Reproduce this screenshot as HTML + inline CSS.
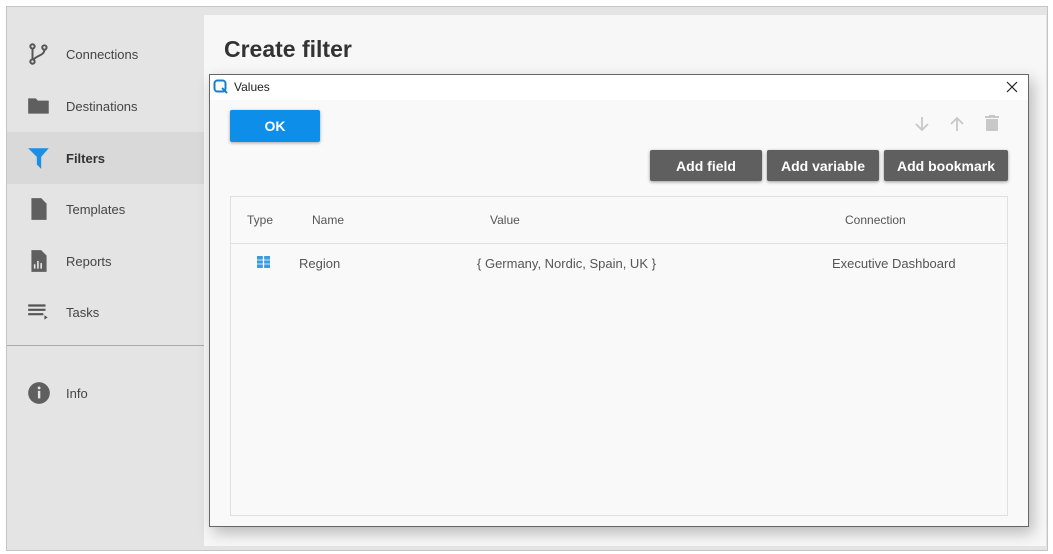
<!DOCTYPE html>
<html><head><style>
body{margin:0;width:1053px;height:554px;background:#fff;font-family:"Liberation Sans",Arial,sans-serif;position:relative;overflow:hidden}
.abs{position:absolute}
.frame{left:6px;top:6px;width:1040px;height:543px;border:1px solid #c4c4c4;background:#e4e4e4}
.main{left:204px;top:15px;width:842px;height:531px;background:#f7f7f7}
.nav{left:7px;width:197px;height:52px;display:flex;align-items:center;font-size:13px;color:#444}
.nav svg{position:absolute;left:19px}
.nav span{position:absolute;left:59px}
.btn{background:#5f5f5f;color:#fff;font-weight:bold;font-size:14px;display:flex;align-items:center;justify-content:center;border-radius:2px;box-shadow:0 1px 3px rgba(0,0,0,.4);height:31px;top:150px}
.th{top:213px;font-size:12px;color:#555}
.td{top:256px;font-size:13px;color:#555}
</style></head><body>
<div class="abs frame"></div>
<div class="abs main"></div>
<div class="abs" style="left:224px;top:36px;font-size:23px;font-weight:bold;color:#333">Create filter</div>

<div class="abs nav" style="top:28px"><svg width="26" height="26" viewBox="0 0 24 24"><circle cx="6" cy="5" r="2" fill="none" stroke="#555" stroke-width="1.8"/><circle cx="6" cy="19" r="2" fill="none" stroke="#555" stroke-width="1.8"/><circle cx="17" cy="6" r="2" fill="none" stroke="#555" stroke-width="1.8"/><path d="M6 7v10M17 8c0 5-6 5-10 9" fill="none" stroke="#555" stroke-width="1.8"/></svg><span>Connections</span></div>
<div class="abs nav" style="top:80px"><svg width="26" height="26" viewBox="0 0 24 24"><path d="M2 5h7l2 2h10v12H2z" fill="#5f5f5f"/></svg><span>Destinations</span></div>
<div class="abs nav" style="top:132px;background:#d9d9d9;font-weight:bold;color:#333"><svg width="26" height="26" viewBox="0 0 24 24"><path d="M2 3h19l-7 8v11l-4-4v-7z" fill="#1a8fe3"/></svg><span>Filters</span></div>
<div class="abs nav" style="top:183px"><svg width="26" height="26" viewBox="0 0 24 24"><path d="M5 2h9l5 5v15H5z" fill="#5f5f5f"/></svg><span>Templates</span></div>
<div class="abs nav" style="top:235px"><svg width="26" height="26" viewBox="0 0 24 24"><path d="M5 2h9l5 5v15H5z" fill="#5f5f5f"/><path d="M8 19v-4M11 19v-7M14 19v-5" stroke="#e4e4e4" stroke-width="1.5"/></svg><span>Reports</span></div>
<div class="abs nav" style="top:286px"><svg width="26" height="26" viewBox="0 0 24 24"><path d="M2 6h16M2 10h16M2 14h14" stroke="#555" stroke-width="2"/><path d="M17 15l3 2-3 2z" fill="#555"/></svg><span>Tasks</span></div>
<div class="abs" style="left:7px;top:345px;width:197px;height:1px;background:#aaa"></div>
<div class="abs nav" style="top:367px"><svg width="26" height="26" viewBox="0 0 24 24"><circle cx="12" cy="12" r="10" fill="#5f5f5f"/><rect x="11" y="10" width="2.2" height="7" fill="#e4e4e4"/><circle cx="12.1" cy="7.3" r="1.3" fill="#e4e4e4"/></svg><span>Info</span></div>

<div class="abs" style="left:209px;top:74px;width:818px;height:451px;border:1px solid #666;background:#f9f9f9;box-shadow:4px 6px 14px rgba(0,0,0,.25)"></div>
<div class="abs" style="left:210px;top:75px;width:818px;height:25px;background:#fff"></div>
<svg class="abs" style="left:213px;top:79px" width="16" height="16" viewBox="0 0 16 16"><rect x="1.5" y="1.5" width="11" height="11" rx="3" fill="none" stroke="#1a7fc9" stroke-width="2"/><path d="M9 9l5 5" stroke="#1a7fc9" stroke-width="2"/></svg>
<div class="abs" style="left:234px;top:80px;font-size:12px;color:#222">Values</div>
<svg class="abs" style="left:1006px;top:81px" width="12" height="12" viewBox="0 0 12 12"><path d="M1 1l10 10M11 1L1 11" stroke="#222" stroke-width="1.2"/></svg>

<div class="abs" style="left:230px;top:110px;width:90px;height:32px;background:#0d8ee9;color:#fff;font-weight:bold;font-size:14px;display:flex;align-items:center;justify-content:center;border-radius:2px;box-shadow:0 1px 3px rgba(0,0,0,.35)">OK</div>

<svg class="abs" style="left:912px;top:114px" width="20" height="20" viewBox="0 0 20 20"><path d="M10 3v13M4 10l6 6 6-6" fill="none" stroke="#c8c8c8" stroke-width="1.8"/></svg>
<svg class="abs" style="left:947px;top:114px" width="20" height="20" viewBox="0 0 20 20"><path d="M10 17V4M4 10l6-6 6 6" fill="none" stroke="#c8c8c8" stroke-width="1.8"/></svg>
<svg class="abs" style="left:982px;top:113px" width="20" height="20" viewBox="0 0 20 20"><path d="M3 3h14v2H3z M7 2h6v1H7z M4 6h12v12H4z" fill="#c8c8c8"/></svg>

<div class="abs btn" style="left:650px;width:112px">Add field</div>
<div class="abs btn" style="left:767px;width:112px">Add variable</div>
<div class="abs btn" style="left:884px;width:124px">Add bookmark</div>

<div class="abs" style="left:230px;top:196px;width:776px;height:318px;border:1px solid #e0e0e0"></div>
<div class="abs" style="left:231px;top:243px;width:776px;height:1px;background:#e0e0e0"></div>
<div class="abs th" style="left:247px">Type</div>
<div class="abs th" style="left:312px">Name</div>
<div class="abs th" style="left:490px">Value</div>
<div class="abs th" style="left:845px">Connection</div>
<svg class="abs" style="left:257px;top:256px" width="13" height="12" viewBox="0 0 13 12"><rect width="13" height="12" fill="#3a9be0"/><path d="M6.5 0v12M0 4h13M0 8h13" stroke="#cde6f8" stroke-width="1"/><path d="M6.5 0v12" stroke="#fff" stroke-width="1.3"/></svg>
<div class="abs td" style="left:299px">Region</div>
<div class="abs td" style="left:477px">{ Germany, Nordic, Spain, UK }</div>
<div class="abs td" style="left:832px">Executive Dashboard</div>
</body></html>
